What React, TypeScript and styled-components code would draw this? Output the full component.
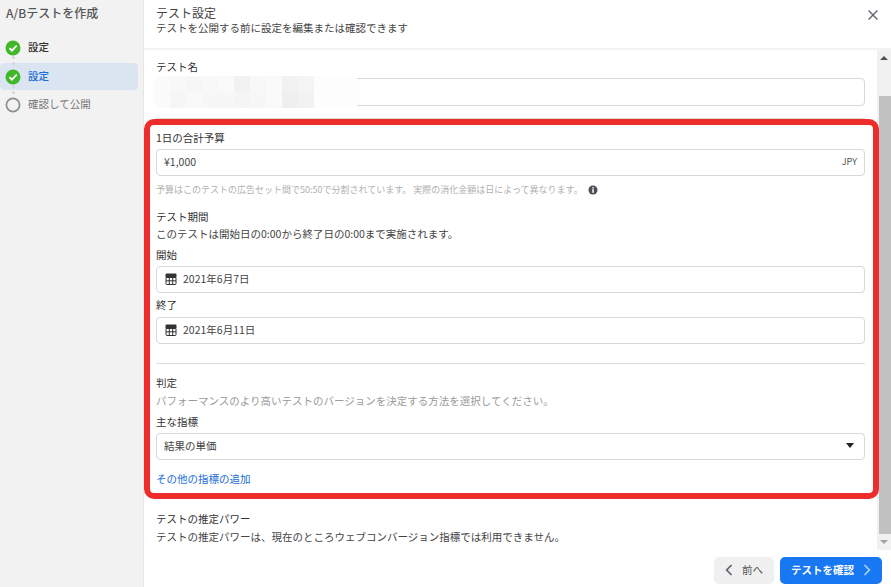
import styled, { createGlobalStyle } from "styled-components";

const mosaic: string[][] = [
    ["#fbfbfb", "#f8f8f8", "#f6f6f6", "#f8f8f8", "#fafafa", "#f2f2f2", "#f8f8f8", "#fafafa", "#f2f2f2", "#f5f5f5", "#fdfdfd"],
    ["#fbfbfb", "#f6f6f6", "#f9f9f9", "#f7f7f7", "#f7f7f7", "#f5f5f5", "#f7f7f7", "#fafafa", "#efefef", "#f2f2f2", "#fdfdfd"],
];

const CheckIcon = () => (
    <svg width="16" height="16" viewBox="0 0 16 16">
        <circle cx="8" cy="8" r="7.5" fill="#42b72a" />
        <path d="M4.4 8.2l2.5 2.5 4.8-5" fill="none" stroke="#fff" strokeWidth="1.7" />
    </svg>
);

const RingIcon = () => (
    <svg width="16" height="16" viewBox="0 0 16 16">
        <circle cx="8" cy="8" r="6.6" fill="none" stroke="#8a8d91" strokeWidth="1.7" />
    </svg>
);

const CalendarIcon = () => (
    <svg width="12" height="12" viewBox="0 0 12 12">
        <path d="M1.5 0.5h9a1 1 0 0 1 1 1v2.5H0.5V1.5a1 1 0 0 1 1-1z" fill="#333" />
        <path
            d="M1 4.5h10v6a1 1 0 0 1-1 1H2a1 1 0 0 1-1-1zM4.3 4.5v7M7.7 4.5v7M1 7.8h10"
            fill="none"
            stroke="#333"
            strokeWidth="1"
        />
    </svg>
);

const InfoIcon = () => (
    <svg width="10" height="10" viewBox="0 0 10 10">
        <circle cx="5" cy="5" r="4.5" fill="#4b4f56" />
        <rect x="4.3" y="4.2" width="1.5" height="3.6" fill="#fff" />
        <rect x="4.3" y="2.1" width="1.5" height="1.4" fill="#fff" />
    </svg>
);

const CloseIcon = () => (
    <svg width="10" height="10" viewBox="0 0 10 10">
        <path d="M0.6 0.6l8.8 8.8M9.4 0.6L0.6 9.4" fill="none" stroke="#606770" strokeWidth="1.4" />
    </svg>
);

const ChevronLeft = () => (
    <svg width="8" height="12" viewBox="0 0 8 12">
        <path d="M6.5 1L1.7 6l4.8 5" fill="none" stroke="#606770" strokeWidth="1.8" />
    </svg>
);

const ChevronRight = () => (
    <svg width="8" height="12" viewBox="0 0 8 12">
        <path d="M1.5 1l4.8 5-4.8 5" fill="none" stroke="#a9cdfb" strokeWidth="1.8" />
    </svg>
);

const App = () => {
    return (
        <Page>
            <GlobalStyle />
            <Sidebar>
                <SideTitle>A/Bテストを作成</SideTitle>
                <Steps>
                    <Step>
                        <StepIcon>
                            <CheckIcon />
                        </StepIcon>
                        <StepText>設定</StepText>
                    </Step>
                    <Connector $height={2} />
                    <Step $active>
                        <StepIcon>
                            <CheckIcon />
                        </StepIcon>
                        <StepText $active>設定</StepText>
                    </Step>
                    <Connector $height={1} />
                    <Step>
                        <StepIcon>
                            <RingIcon />
                        </StepIcon>
                        <StepText $muted>確認して公開</StepText>
                    </Step>
                </Steps>
            </Sidebar>
            <Main>
                <Header>
                    <div>
                        <HeaderTitle>テスト設定</HeaderTitle>
                        <HeaderSub>テストを公開する前に設定を編集または確認できます</HeaderSub>
                    </div>
                    <CloseButton>
                        <CloseIcon />
                    </CloseButton>
                </Header>
                <Body>
                    <Content>
                        <Label $top={9}>テスト名</Label>
                        <NameField $top={3}>
                            <Mosaic>
                                {mosaic.flat().map((color, i) => (
                                    <Tile key={i} $color={color} />
                                ))}
                            </Mosaic>
                        </NameField>
                        <Divider $top={12} />
                        <Label $top={11}>1日の合計予算</Label>
                        <Field $top={3}>
                            <span>¥1,000</span>
                            <Currency>JPY</Currency>
                        </Field>
                        <Hint $top={7}>
                            予算はこのテストの広告セット間で50:50で分割されています。 実際の消化金額は日によって異なります。
                            <InfoWrap>
                                <InfoIcon />
                            </InfoWrap>
                        </Hint>
                        <Label $top={12}>テスト期間</Label>
                        <Text $top={1}>このテストは開始日の0:00から終了日の0:00まで実施されます。</Text>
                        <Label $top={5}>開始</Label>
                        <DateField $top={3}>
                            <CalendarIcon />
                            <span>2021年6月7日</span>
                        </DateField>
                        <Label $top={4}>終了</Label>
                        <DateField $top={4}>
                            <CalendarIcon />
                            <span>2021年6月11日</span>
                        </DateField>
                        <Divider $top={19} />
                        <Label $top={11}>判定</Label>
                        <Text $top={2} $muted>
                            パフォーマンスのより高いテストのバージョンを決定する方法を選択してください。
                        </Text>
                        <Label $top={5}>主な指標</Label>
                        <Field $top={3}>
                            <span>結果の単価</span>
                            <Caret />
                        </Field>
                        <AddLink>その他の指標の追加</AddLink>
                        <Label $top={24}>テストの推定パワー</Label>
                        <Text $top={2}>
                            テストの推定パワーは、現在のところウェブコンバージョン指標では利用できません。
                        </Text>
                    </Content>
                    <Scrollbar>
                        <ArrowUp />
                        <Thumb />
                        <ArrowDown />
                    </Scrollbar>
                </Body>
                <Footer>
                    <BackButton>
                        <ChevronLeft />
                        <span>前へ</span>
                    </BackButton>
                    <NextButton>
                        <span>テストを確認</span>
                        <ChevronRight />
                    </NextButton>
                </Footer>
            </Main>
            <Highlight />
        </Page>
    );
};

export default App;

const GlobalStyle = createGlobalStyle`
    html, body {
        margin: 0;
        padding: 0;
        background: #fff;
    }
    * {
        box-sizing: border-box;
    }
`;

const Page = styled.div`
    position: relative;
    display: flex;
    width: 891px;
    height: 587px;
    overflow: hidden;
    font-family: "Noto Sans CJK JP", "Liberation Sans", sans-serif;
    font-size: 10.5px;
    line-height: 16px;
    color: #333;
`;

/* sidebar */
const Sidebar = styled.div`
    flex: 0 0 144px;
    background-color: #f2f2f2;
    border-right: 1px solid #e6e6e6;
    padding-right: 5px;
`;
const SideTitle = styled.div`
    padding: 5px 0 0 6px;
    height: 34px;
    font-size: 12px;
    font-weight: 500;
    color: #555;
`;
const Steps = styled.div`
    display: flex;
    flex-direction: column;
`;
const Step = styled.div<{ $active?: boolean }>`
    display: flex;
    align-items: center;
    gap: 7px;
    height: 27px;
    padding-left: 5px;
    border-radius: 4px;
    background-color: ${(p) => (p.$active ? "#dbe5f1" : "transparent")};
`;
const StepIcon = styled.span`
    display: flex;
`;
const StepText = styled.span<{ $active?: boolean; $muted?: boolean }>`
    margin-top: -2px;
    font-weight: ${(p) => (p.$muted ? 400 : 500)};
    color: ${(p) => (p.$active ? "#1a6ed8" : p.$muted ? "#777" : "#333")};
`;
const Connector = styled.div<{ $height: number }>`
    position: relative;
    height: ${(p) => p.$height}px;
    &::before,
    &::after {
        content: "";
        position: absolute;
        left: 12px;
        width: 3px;
        height: 3px;
        border-radius: 50%;
        background-color: #d3d6da;
    }
    &::before {
        top: -5px;
    }
    &::after {
        top: 1px;
    }
`;

/* main */
const Main = styled.div`
    flex: 1;
    display: flex;
    flex-direction: column;
    min-width: 0;
`;
const Header = styled.div`
    flex: 0 0 50px;
    display: flex;
    justify-content: space-between;
    padding: 5px 13px 0 12px;
    border-bottom: 2px solid #f3f3f3;
`;
const HeaderTitle = styled.div`
    font-size: 12px;
    line-height: 16px;
    color: #444;
`;
const HeaderSub = styled.div`
    line-height: 14px;
    color: #444;
`;
const CloseButton = styled.div`
    display: flex;
    margin-top: 5px;
`;
const Body = styled.div`
    flex: 0 0 500px;
    display: flex;
    min-height: 0;
`;
const Content = styled.div`
    flex: 1;
    padding: 0 12px;
    min-width: 0;
`;
const Label = styled.div<{ $top: number }>`
    margin-top: ${(p) => p.$top}px;
    color: #333;
`;
const Text = styled.div<{ $top: number; $muted?: boolean }>`
    margin-top: ${(p) => p.$top}px;
    color: ${(p) => (p.$muted ? "#9a9a9a" : "#444")};
`;
const Hint = styled.div<{ $top: number }>`
    display: flex;
    align-items: center;
    margin-top: ${(p) => p.$top}px;
    font-size: 9px;
    line-height: 14px;
    color: #b0b0b0;
`;
const InfoWrap = styled.span`
    display: flex;
    margin-left: 5px;
`;
const Field = styled.div<{ $top: number }>`
    display: flex;
    align-items: center;
    justify-content: space-between;
    height: 27px;
    margin-top: ${(p) => p.$top}px;
    padding: 0 7px 2px;
    background-color: #fff;
    border: 1px solid #d8d8d8;
    border-radius: 4px;
    color: #444;
`;
const NameField = styled(Field)`
    position: relative;
    height: 28px;
`;
const Mosaic = styled.div`
    position: absolute;
    left: -3px;
    top: -3px;
    display: grid;
    grid-template-columns: repeat(10, 16px) 45px;
    grid-auto-rows: 16px;
    border-radius: 7px;
    overflow: hidden;
`;
const Tile = styled.div<{ $color: string }>`
    background-color: ${(p) => p.$color};
`;
const DateField = styled(Field)`
    justify-content: flex-start;
    gap: 6px;
    padding-left: 8px;
`;
const Currency = styled.span`
    font-size: 9px;
    color: #555;
`;
const Caret = styled.span`
    width: 0;
    height: 0;
    border-left: 4px solid transparent;
    border-right: 4px solid transparent;
    border-top: 5px solid #222;
    margin-right: 3px;
`;
const Divider = styled.div<{ $top: number }>`
    height: 1px;
    margin-top: ${(p) => p.$top}px;
    background-color: #dcdcdc;
`;
const AddLink = styled.div`
    margin-top: 11px;
    color: #1a6ed8;
`;

/* scrollbar */
const Scrollbar = styled.div`
    position: relative;
    flex: 0 0 14px;
    background-color: #f1f1f1;
`;
const Thumb = styled.div`
    position: absolute;
    top: 46px;
    left: 2px;
    right: 0;
    height: 438px;
    background-color: #c1c1c1;
`;
const ArrowUp = styled.div`
    position: absolute;
    top: 6px;
    left: 3px;
    width: 0;
    height: 0;
    border-left: 4px solid transparent;
    border-right: 4px solid transparent;
    border-bottom: 4px solid #505050;
`;
const ArrowDown = styled.div`
    position: absolute;
    bottom: 6px;
    left: 3px;
    width: 0;
    height: 0;
    border-left: 4px solid transparent;
    border-right: 4px solid transparent;
    border-top: 4px solid #a3a3a3;
`;

/* footer */
const Footer = styled.div`
    flex: 1;
    display: flex;
    justify-content: flex-end;
    gap: 6px;
    padding: 7px 9px 0 0;
`;
const BackButton = styled.div`
    display: flex;
    align-items: center;
    justify-content: center;
    gap: 9px;
    width: 60px;
    height: 27px;
    padding-bottom: 2px;
    border-radius: 5px;
    background-color: #f0f0f0;
    color: #555;
`;
const NextButton = styled.div`
    display: flex;
    align-items: center;
    justify-content: center;
    gap: 9px;
    width: 102px;
    height: 27px;
    padding-bottom: 2px;
    border-radius: 5px;
    background-color: #1877f2;
    color: #fff;
    font-weight: 700;
`;

/* red frame drawn over the form */
const Highlight = styled.div`
    position: absolute;
    left: 144px;
    top: 119px;
    width: 735px;
    height: 380px;
    border: 6px solid #ee2c2c;
    border-radius: 10px;
    pointer-events: none;
`;
